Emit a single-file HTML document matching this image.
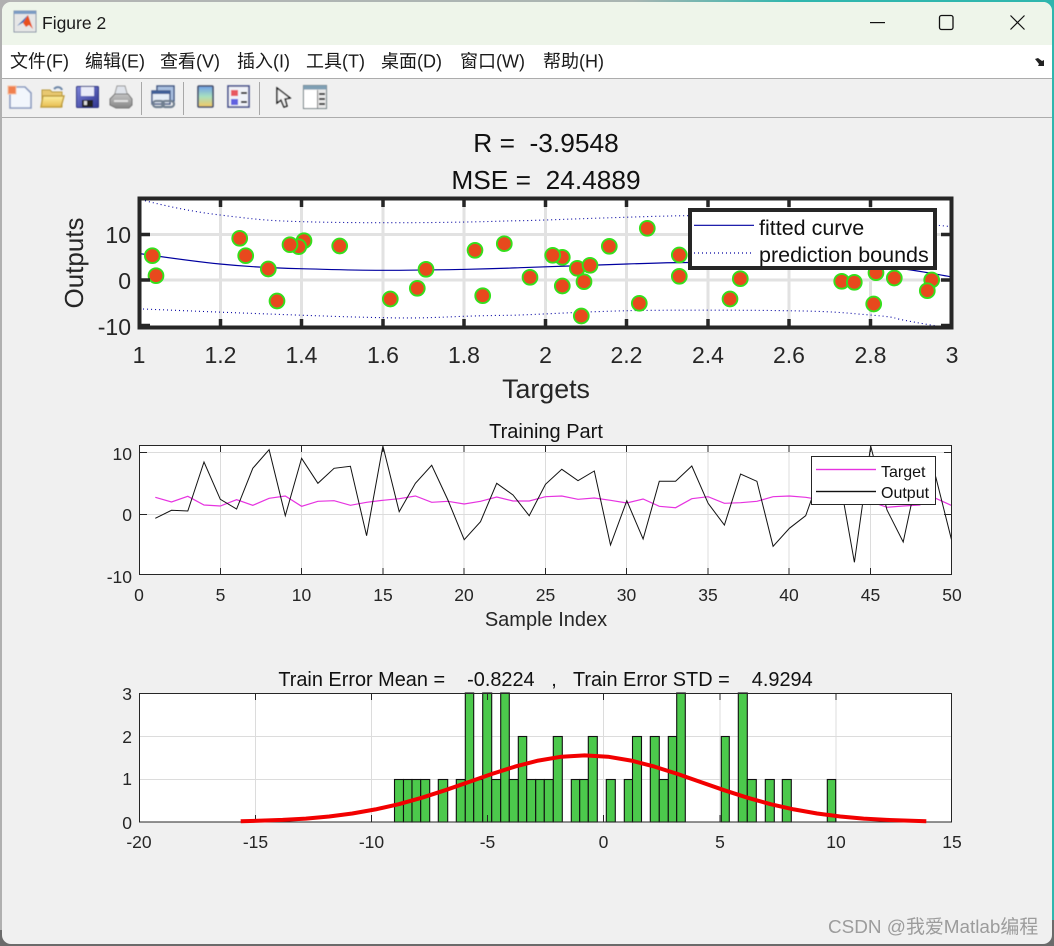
<!DOCTYPE html>
<html><head><meta charset="utf-8"><title>Figure 2</title>
<style>
html,body{margin:0;padding:0;width:1054px;height:946px;overflow:hidden;background:#777}
svg{display:block}
text{font-family:"Liberation Sans","Noto Sans CJK SC",sans-serif;fill:#262626;white-space:pre}
.m{font-size:18px;fill:#1a1a1a}
.t{font-size:17.5px}
.e{text-anchor:end}
.c{text-anchor:middle}
</style></head><body>
<svg width="1054" height="946" viewBox="0 0 1054 946" xmlns="http://www.w3.org/2000/svg">
<defs>
<linearGradient id="edge" x1="0" x2="1" y1="0" y2="0"><stop offset="0" stop-color="#b5b5b5"/><stop offset=".6" stop-color="#a9b5b2"/><stop offset=".75" stop-color="#2fb6ae"/><stop offset="1" stop-color="#2fb6ae"/></linearGradient>
<linearGradient id="cb" x1="0" x2="0" y1="0" y2="1"><stop offset="0" stop-color="#6f9fe8"/><stop offset=".5" stop-color="#a8e0c0"/><stop offset="1" stop-color="#f5c860"/></linearGradient>
<linearGradient id="fold" x1="0" x2="0" y1="0" y2="1"><stop offset="0" stop-color="#fdf0a0"/><stop offset="1" stop-color="#e8bd50"/></linearGradient>
<linearGradient id="sv" x1="0" x2="1" y1="0" y2="1"><stop offset="0" stop-color="#7b82d8"/><stop offset="1" stop-color="#2f3590"/></linearGradient>
<linearGradient id="pr" x1="0" x2="0" y1="0" y2="1"><stop offset="0" stop-color="#c4c4c4"/><stop offset="1" stop-color="#858585"/></linearGradient>
<filter id="b" x="-5%" y="-5%" width="110%" height="110%"><feGaussianBlur stdDeviation="0.4"/></filter>
<clipPath id="c1"><rect x="139" y="198" width="813" height="130"/></clipPath>
<clipPath id="c2"><rect x="139" y="445" width="813" height="130"/></clipPath>
</defs>
<rect width="1054" height="946" fill="#6b6b6b"/>
<rect width="1054" height="12" fill="url(#edge)"/>
<rect x="1040" y="0" width="14" height="920" fill="#2fb6ae"/>
<rect x="0" y="0" width="10" height="930" fill="#b0b0b0"/>
<rect x="2" y="2" width="1050" height="942" rx="9" fill="#f0f0f0"/>
<path d="M2 45V11a9 9 0 0 1 9-9H1043a9 9 0 0 1 9 9V45Z" fill="#eef5ea"/>
<rect x="2" y="45" width="1050" height="33" fill="#fff"/>
<rect x="2" y="78" width="1050" height="1" fill="#acacac"/>
<rect x="2" y="117" width="1050" height="1" fill="#acacac"/>

<!-- title icon -->
<g filter="url(#b)">
<rect x="14" y="11" width="22" height="21" fill="#e6e6e6" stroke="#8c97a8"/>
<rect x="14" y="11" width="22" height="3" fill="#7a9cc4"/>
<path d="M17 26l7-4 4-7z" fill="#2f6db8"/>
<path d="M23 23l5-8 5 14-4-4-3 2z" fill="#e8501c"/>
</g>
<text x="42" y="29" style="font-size:17.5px;fill:#1a1a1a">Figure 2</text>
<!-- window controls -->
<rect x="870" y="22" width="15" height="1.2" fill="#111"/>
<rect x="939.5" y="15.5" width="13.5" height="14" rx="2" fill="none" stroke="#111" stroke-width="1.3"/>
<path d="M1010.5 15.5l14 14M1024.5 15.5l-14 14" stroke="#111" stroke-width="1.2" fill="none"/>

<!-- menu -->
<text class="m" x="10" y="67.500">文件(F)</text>
<text class="m" x="85" y="67.500">编辑(E)</text>
<text class="m" x="160" y="67.500">查看(V)</text>
<text class="m" x="237" y="67.500">插入(I)</text>
<text class="m" x="306" y="67.500">工具(T)</text>
<text class="m" x="381" y="67.500">桌面(D)</text>
<text class="m" x="460" y="67.500">窗口(W)</text>
<text class="m" x="543" y="67.500">帮助(H)</text>
<path d="M1035 59l3-1 4 3 2-1v6h-6l1-2z" fill="#222"/>

<!-- toolbar icons -->
<g filter="url(#b)">
<path d="M10 87h15l6 6v15H10z" fill="#f2f6fc" stroke="#8c9cc0" stroke-width="1.6"/>
<rect x="8" y="86" width="8" height="8" fill="#f08050" stroke="#f5c0a0"/>
<path d="M42 94v-4h8l2 2h10v15H42z" fill="#e8c870" stroke="#b89a40"/>
<path d="M41 107l2-11h21l-3 11z" fill="url(#fold)" stroke="#c09f40" stroke-width="1.400"/>
<path d="M54 89c3-3 7-2 8 1" fill="none" stroke="#6f88a8" stroke-width="2"/>
<rect x="76.500" y="86.500" width="22" height="21" rx="1" fill="url(#sv)" stroke="#2f3580"/>
<rect x="81" y="87" width="13" height="9" fill="#e8eaf8"/>
<rect x="82" y="100" width="11" height="7" fill="#222"/>
<rect x="84" y="101" width="3" height="4" fill="#ddd"/>
<path d="M114 97l3-11h8l3 11z" fill="#dfe3ea" stroke="#999"/>
<path d="M110 99l5-5h13l4 5v6l-3 3h-13l-6-3z" fill="url(#pr)" stroke="#777"/>
<rect x="114" y="100" width="14" height="2" fill="#e2e2e2"/>
<rect x="157" y="86" width="17" height="15" fill="#a9c0e0" stroke="#3f5480" stroke-width="1.4"/>
<rect x="152" y="91" width="18" height="13" fill="#e6edf6" stroke="#3f5480" stroke-width="1.4"/>
<rect x="152" y="91" width="18" height="3" fill="#3f5f98"/>
<rect x="153" y="101" width="11" height="6" rx="3" fill="none" stroke="#6f7f90" stroke-width="2.200"/>
<rect x="162" y="101" width="12" height="6" rx="3" fill="none" stroke="#6f7f90" stroke-width="2.200"/>
<rect x="198" y="86" width="15" height="21" rx="1" fill="url(#cb)" stroke="#46506a" stroke-width="1.600"/>
<rect x="228" y="86" width="21" height="21" fill="#f0f2f8" stroke="#46508a" stroke-width="1.600"/>
<rect x="231" y="90" width="7" height="6" fill="#e85860"/>
<rect x="231" y="99" width="7" height="6" fill="#6060e0"/>
<rect x="241" y="92" width="6" height="2" fill="#222"/>
<rect x="241" y="101" width="6" height="2" fill="#222"/>
<path d="M277 88v15l4-3 3 7 3-1-2-7 5-1z" fill="#f4f4f4" stroke="#111" stroke-width="1.400"/>
<rect x="303.500" y="85.500" width="23" height="23" fill="#e8e8e8" stroke="#6c7a80"/>
<rect x="303.500" y="85.500" width="23" height="4" fill="#7f9fb4"/>
<rect x="304" y="90" width="13" height="18" fill="#fff"/>
<rect x="317" y="90" width="1" height="18" fill="#777"/>
<rect x="319" y="93" width="6" height="2" fill="#333"/>
<rect x="319" y="98" width="6" height="2" fill="#333"/>
<rect x="319" y="103" width="6" height="2" fill="#333"/>
</g>
<rect x="141" y="82" width="1" height="33" fill="#a8a8a8"/>
<rect x="183" y="82" width="1" height="33" fill="#a8a8a8"/>
<rect x="259" y="82" width="1" height="33" fill="#a8a8a8"/>

<!-- ===== Top plot ===== -->
<text class="c" x="546" y="152" style="font-size:26.300px;fill:#111">R =  -3.9548</text>
<text class="c" x="546" y="189" style="font-size:26.300px;fill:#111">MSE =  24.4889</text>
<rect x="139" y="198" width="813" height="130" fill="#fff"/>
<g stroke="#e2e2e2" stroke-width="3" fill="none">
<path d="M220.500 198V328M301.500 198V328M383 198V328M464 198V328M545.500 198V328M626.500 198V328M708 198V328M789 198V328M870.500 198V328M139 234.500H952M139 280H952"/>
</g>
<g clip-path="url(#c1)" fill="none" stroke="#0000a0">
<path stroke-width="1.2" d="M139 253.500C170 258 200 262 220 264S270 268 300 268.700 350 270.300 383 270.300 440 269.800 467 269.300 500 268.500 520 267.700 590 265.300 627 264 670 262.500 690 262.500 800 260 897 268C920 271 935 274 952 277"/>
<path stroke-width="1.1" stroke-dasharray="1 3" d="M145 200.700C170 207 195 212 220 215S260 220 283 221 340 222.700 383 222.700 440 222.500 467 222 500 221 520 220.700 570 219 603 218 660 216 687 215.700 850 215 935 225L952 226.700"/>
<path stroke-width="1.1" stroke-dasharray="1 3" d="M143 309C180 310.500 215 312 250 313.300S340 316.800 383 317.700 440 317 473 316 500 315.700 520 315 590 311.500 627 310.700 740 310 787 310.700 840 312.500 870 315 890 317.500 903 320 930 325 950 328"/>
</g>
<g stroke="#33e01c" stroke-width="1.900" fill="#e8491d">
<circle cx="152.300" cy="255.700" r="7.400"/><circle cx="156" cy="275.700" r="7.400"/><circle cx="239.700" cy="238.300" r="7.400"/><circle cx="245.700" cy="255.700" r="7.400"/><circle cx="268.300" cy="269" r="7.400"/><circle cx="277" cy="301" r="7.400"/><circle cx="304" cy="240.700" r="7.400"/><circle cx="298.700" cy="246.700" r="7.400"/><circle cx="290" cy="244.700" r="7.400"/><circle cx="339.700" cy="246" r="7.400"/><circle cx="390.300" cy="299" r="7.400"/><circle cx="417.300" cy="288.300" r="7.400"/><circle cx="426" cy="269.300" r="7.400"/><circle cx="475" cy="250.300" r="7.400"/><circle cx="482.700" cy="295.700" r="7.400"/><circle cx="504.300" cy="243.700" r="7.400"/><circle cx="530" cy="277.300" r="7.400"/><circle cx="562.300" cy="257.300" r="7.400"/><circle cx="552.700" cy="255.300" r="7.400"/><circle cx="562.300" cy="286" r="7.400"/><circle cx="577.300" cy="268.300" r="7.400"/><circle cx="590" cy="265.300" r="7.400"/><circle cx="584" cy="281.700" r="7.400"/><circle cx="581.300" cy="316" r="7.400"/><circle cx="609.300" cy="246.300" r="7.400"/><circle cx="647.300" cy="228.300" r="7.400"/><circle cx="639.300" cy="303.300" r="7.400"/><circle cx="679.300" cy="255" r="7.400"/><circle cx="679.300" cy="276.300" r="7.400"/><circle cx="730" cy="299" r="7.400"/><circle cx="740.300" cy="278.700" r="7.400"/><circle cx="841.700" cy="281.300" r="7.400"/><circle cx="854.300" cy="282.300" r="7.400"/><circle cx="876" cy="272.700" r="7.400"/><circle cx="873.700" cy="304" r="7.400"/><circle cx="894.300" cy="278" r="7.400"/><circle cx="931.700" cy="280" r="7.400"/><circle cx="927.300" cy="290.700" r="7.400"/>
</g>
<g stroke="#262626" stroke-width="3.500" fill="none">
<path d="M220.500 198v9M301.500 198v9M383 198v9M464 198v9M545.500 198v9M626.500 198v9M708 198v9M789 198v9M870.500 198v9M220.500 328v-9M301.500 328v-9M383 328v-9M464 328v-9M545.500 328v-9M626.500 328v-9M708 328v-9M789 328v-9M870.500 328v-9"/>
<path d="M139 234.500h11M139 280h11M139 325.500h11M952 234.500h-11M952 280h-11M952 325.500h-11"/>
</g>
<rect x="139.500" y="198.500" width="812" height="129" fill="none" stroke="#262626" stroke-width="4"/>
<rect x="690" y="210" width="245" height="58" fill="#fff" stroke="#262626" stroke-width="4"/>
<path d="M694 225.300h60" stroke="#0000a0" stroke-width="1.200"/>
<path d="M694 253h58" stroke="#0000a0" stroke-width="1.200" stroke-dasharray="1 3"/>
<text x="759" y="235" style="font-size:21.500px;fill:#111">fitted curve</text>
<text x="759" y="262" style="font-size:21.500px;fill:#111">prediction bounds</text>
<text class="e" x="131" y="243" style="font-size:23px">10</text>
<text class="e" x="131" y="289" style="font-size:23px">0</text>
<text class="e" x="131" y="335" style="font-size:23px">-10</text>
<text class="c" x="139" y="363" style="font-size:23px">1</text>
<text class="c" x="220.500" y="363" style="font-size:23px">1.2</text>
<text class="c" x="301.500" y="363" style="font-size:23px">1.4</text>
<text class="c" x="383" y="363" style="font-size:23px">1.6</text>
<text class="c" x="464" y="363" style="font-size:23px">1.8</text>
<text class="c" x="545.500" y="363" style="font-size:23px">2</text>
<text class="c" x="626.500" y="363" style="font-size:23px">2.2</text>
<text class="c" x="708" y="363" style="font-size:23px">2.4</text>
<text class="c" x="789" y="363" style="font-size:23px">2.6</text>
<text class="c" x="870.500" y="363" style="font-size:23px">2.8</text>
<text class="c" x="952" y="363" style="font-size:23px">3</text>
<text class="c" x="546" y="398" style="font-size:26.800px">Targets</text>
<text class="c" transform="translate(83 263) rotate(-90)" style="font-size:26px">Outputs</text>

<!-- ===== Middle plot ===== -->
<rect x="139" y="445" width="813" height="130" fill="#fff"/>
<path d="M220.500 445V575M301.500 445V575M383 445V575M464 445V575M545.500 445V575M626.500 445V575M708 445V575M789 445V575M870.500 445V575M139 452.500H952M139 514.500H952" stroke="#dcdcdc" fill="none"/>
<g clip-path="url(#c2)" fill="none">
<polyline stroke="#e633e0" stroke-width="1.200" points="155.300,497.300 171.500,502 187.800,496.300 204,505 220.300,506 236.600,499.700 252.800,505.300 269.100,498.300 285.300,496 301.600,506.300 317.900,501.300 334.100,500.700 350.400,505.300 366.600,502.300 382.900,500.300 399.200,498.700 415.400,496 431.700,502.300 447.900,501.300 464.200,504 480.500,501.300 496.700,497 513,501 529.200,501 545.500,496.700 561.800,496 578,499.300 594.300,498 610.500,500.300 626.800,503 643.100,499 659.300,506.300 675.600,507.700 691.800,498.700 708.100,496.700 724.400,503.300 740.600,502.700 756.900,501.300 773.100,496.700 789.400,496 805.700,497.300 821.900,500 838.200,501.700 854.400,503.300 870.700,501.700 887,507.300 903.200,506 919.500,505 935.700,498.300 952,505.700"/>
<polyline stroke="#111" stroke-width="1" points="155.300,518.300 171.500,510.300 187.800,511 204,462 220.300,499.300 236.600,509 252.800,468.300 269.100,449.700 285.300,515.700 301.600,458.300 317.900,483.300 334.100,468.300 350.400,466.300 366.600,535.700 382.900,446 399.200,511.700 415.400,483.300 431.700,465.300 447.900,500 464.200,539.700 480.500,521.700 496.700,483.300 513,495 529.200,515.700 545.500,484.300 561.800,469.300 578,480.700 594.300,471 610.500,545 626.800,500.700 643.100,539 659.300,481.300 675.600,481.300 691.800,466 708.100,503.300 724.400,525 740.600,474 756.900,481.300 773.100,546.300 789.400,528.300 805.700,515.700 821.900,470 838.200,471 854.400,562.300 870.700,446 887,510 903.200,542 919.500,466 935.700,476.700 952,541.700"/>
</g>
<path d="M220.500 445v7M301.500 445v7M383 445v7M464 445v7M545.500 445v7M626.500 445v7M708 445v7M789 445v7M870.500 445v7M220.500 575v-7M301.500 575v-7M383 575v-7M464 575v-7M545.500 575v-7M626.500 575v-7M708 575v-7M789 575v-7M870.500 575v-7M139 452.500h8M139 514.500h8M952 452.500h-8M952 514.500h-8" stroke="#262626" fill="none"/>
<rect x="139.500" y="445.500" width="812" height="129" fill="none" stroke="#262626"/>
<rect x="811.500" y="456.500" width="124" height="48" fill="#fff" stroke="#262626"/>
<rect x="816" y="468.800" width="60" height="1.400" fill="#e633e0"/>
<rect x="816" y="490.800" width="60" height="1.400" fill="#111"/>
<text x="881" y="477" style="font-size:16px;fill:#111">Target</text>
<text x="881" y="498" style="font-size:16px;fill:#111">Output</text>
<text class="c" x="546" y="438" style="font-size:20px;fill:#111">Training Part</text>
<text class="t e" x="132" y="460">10</text>
<text class="t e" x="132" y="521">0</text>
<text class="t e" x="132" y="583">-10</text>
<text class="t c" x="139" y="601">0</text><text class="t c" x="220.500" y="601">5</text><text class="t c" x="301.500" y="601">10</text><text class="t c" x="383" y="601">15</text><text class="t c" x="464" y="601">20</text><text class="t c" x="545.500" y="601">25</text><text class="t c" x="626.500" y="601">30</text><text class="t c" x="708" y="601">35</text><text class="t c" x="789" y="601">40</text><text class="t c" x="870.500" y="601">45</text><text class="t c" x="952" y="601">50</text>
<text class="c" x="546" y="626" style="font-size:20px">Sample Index</text>

<!-- ===== Bottom plot ===== -->
<rect x="139" y="693" width="813" height="129" fill="#fff"/>
<path d="M255.500 693V822M371.500 693V822M487.500 693V822M603.500 693V822M720 693V822M836 693V822M139 779.500H952M139 736.500H952" stroke="#dcdcdc" fill="none"/>
<g fill="#4cc94c" stroke="#111" stroke-width="1.100">
<rect x="394.500" y="779.500" width="9" height="42.500"/><rect x="403.500" y="779.500" width="8.500" height="42.500"/><rect x="412" y="779.500" width="8.700" height="42.500"/><rect x="420.700" y="779.500" width="9" height="42.500"/>
<rect x="438.300" y="779.500" width="9.400" height="42.500"/>
<rect x="456.300" y="779.500" width="9" height="42.500"/>
<rect x="465.300" y="693" width="8.400" height="129"/>
<rect x="473.700" y="779.500" width="9" height="42.500"/>
<rect x="482.700" y="693" width="9" height="129"/>
<rect x="491.700" y="779.500" width="9" height="42.500"/>
<rect x="500.700" y="693" width="8.600" height="129"/>
<rect x="509.300" y="779.500" width="9" height="42.500"/>
<rect x="518.300" y="736.500" width="8.400" height="85.500"/>
<rect x="526.700" y="779.500" width="9" height="42.500"/>
<rect x="535.700" y="779.500" width="8.600" height="42.500"/>
<rect x="544.300" y="779.500" width="9" height="42.500"/>
<rect x="553.300" y="736.500" width="9" height="85.500"/>
<rect x="571.300" y="779.500" width="8.400" height="42.500"/>
<rect x="579.700" y="779.500" width="8.600" height="42.500"/>
<rect x="588.300" y="736.500" width="9" height="85.500"/>
<rect x="606.300" y="779.500" width="9" height="42.500"/>
<rect x="624.300" y="779.500" width="8.400" height="42.500"/>
<rect x="632.500" y="736.500" width="9" height="85.500"/>
<rect x="650.300" y="736.500" width="9" height="85.500"/>
<rect x="659.300" y="779.500" width="9" height="42.500"/>
<rect x="668.300" y="736.500" width="8.400" height="85.500"/>
<rect x="676.700" y="693" width="8.600" height="129"/>
<rect x="721.300" y="736.500" width="8" height="85.500"/>
<rect x="738.300" y="693" width="9" height="129"/>
<rect x="747.300" y="779.500" width="9" height="42.500"/>
<rect x="765.300" y="779.500" width="9" height="42.500"/>
<rect x="782.300" y="779.500" width="9" height="42.500"/>
<rect x="827.300" y="779.500" width="8.400" height="42.500"/>
</g>
<path d="M255.500 693v7M371.500 693v7M487.500 693v7M603.500 693v7M720 693v7M836 693v7M255.500 822v-7M371.500 822v-7M487.500 822v-7M603.500 822v-7M720 822v-7M836 822v-7" stroke="#262626" fill="none"/>
<rect x="139.500" y="693.500" width="812" height="128.500" fill="none" stroke="#262626"/>
<polyline fill="none" stroke="#f20000" stroke-width="4" stroke-linejoin="round" points="240.700,821.300 282.600,819.900 305.800,818.600 329.100,816.500 352.300,813.500 375.500,809.400 398.800,804.200 422,797.700 445.300,790.200 468.500,782.100 491.700,774 515,766.600 538.200,760.600 561.500,756.700 584.700,755.400 607.900,756.700 631.200,760.600 654.400,766.600 677.700,774 700.900,782.100 724.100,790.200 747.400,797.700 770.600,804.200 793.900,809.400 817.100,813.500 840.300,816.500 863.600,818.600 886.800,819.900 926.300,821.300"/>
<text class="c" x="545.500" y="686" style="font-size:19.900px;fill:#111">Train Error Mean =    -0.8224   ,   Train Error STD =    4.9294</text>
<text class="t e" x="132" y="700">3</text><text class="t e" x="132" y="743">2</text><text class="t e" x="132" y="785">1</text><text class="t e" x="132" y="829">0</text>
<text class="t c" x="139" y="848">-20</text><text class="t c" x="255.500" y="848">-15</text><text class="t c" x="371.500" y="848">-10</text><text class="t c" x="487.500" y="848">-5</text><text class="t c" x="603.500" y="848">0</text><text class="t c" x="720" y="848">5</text><text class="t c" x="836" y="848">10</text><text class="t c" x="952" y="848">15</text>

<text x="828" y="933" style="font-size:18.900px;fill:#9c9c9c">CSDN @我爱Matlab编程</text>
</svg>
</body></html>
